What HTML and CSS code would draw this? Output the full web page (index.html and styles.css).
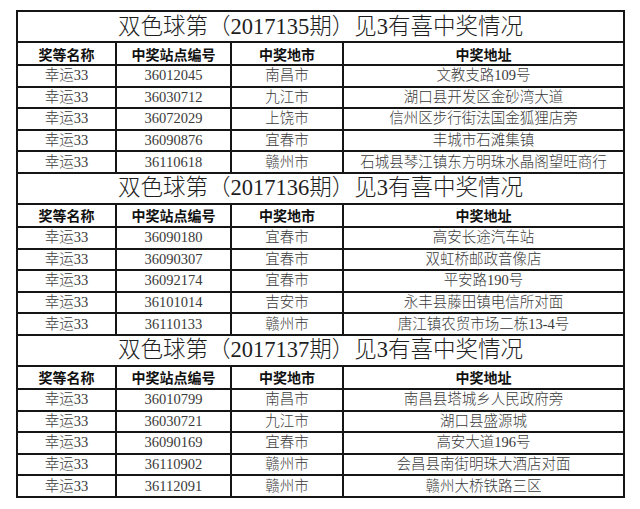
FILE: index.html
```html
<!DOCTYPE html>
<html lang="zh-CN">
<head>
<meta charset="utf-8">
<title>双色球见3有喜中奖情况</title>
<link rel="stylesheet" href="styles.css">
</head>
<body>
<table class="sheet">
  <colgroup>
    <col class="c1"><col class="c2"><col class="c3"><col class="c4">
  </colgroup>
  <tbody>
    <tr class="title"><td colspan="4">双色球第（2017135期）见3有喜中奖情况</td></tr>
    <tr class="head"><th>奖等名称</th><th>中奖站点编号</th><th>中奖地市</th><th>中奖地址</th></tr>
    <tr class="row"><td>幸运33</td><td>36012045</td><td>南昌市</td><td>文教支路109号</td></tr>
    <tr class="row"><td>幸运33</td><td>36030712</td><td>九江市</td><td>湖口县开发区金砂湾大道</td></tr>
    <tr class="row"><td>幸运33</td><td>36072029</td><td>上饶市</td><td>信州区步行街法国金狐狸店旁</td></tr>
    <tr class="row"><td>幸运33</td><td>36090876</td><td>宜春市</td><td>丰城市石滩集镇</td></tr>
    <tr class="row"><td>幸运33</td><td>36110618</td><td>赣州市</td><td>石城县琴江镇东方明珠水晶阁望旺商行</td></tr>

    <tr class="title"><td colspan="4">双色球第（2017136期）见3有喜中奖情况</td></tr>
    <tr class="head"><th>奖等名称</th><th>中奖站点编号</th><th>中奖地市</th><th>中奖地址</th></tr>
    <tr class="row"><td>幸运33</td><td>36090180</td><td>宜春市</td><td>高安长途汽车站</td></tr>
    <tr class="row"><td>幸运33</td><td>36090307</td><td>宜春市</td><td>双虹桥邮政音像店</td></tr>
    <tr class="row"><td>幸运33</td><td>36092174</td><td>宜春市</td><td>平安路190号</td></tr>
    <tr class="row"><td>幸运33</td><td>36101014</td><td>吉安市</td><td>永丰县藤田镇电信所对面</td></tr>
    <tr class="row"><td>幸运33</td><td>36110133</td><td>赣州市</td><td>唐江镇农贸市场二栋13-4号</td></tr>

    <tr class="title"><td colspan="4">双色球第（2017137期）见3有喜中奖情况</td></tr>
    <tr class="head"><th>奖等名称</th><th>中奖站点编号</th><th>中奖地市</th><th>中奖地址</th></tr>
    <tr class="row"><td>幸运33</td><td>36010799</td><td>南昌市</td><td>南昌县塔城乡人民政府旁</td></tr>
    <tr class="row"><td>幸运33</td><td>36030721</td><td>九江市</td><td>湖口县盛源城</td></tr>
    <tr class="row"><td>幸运33</td><td>36090169</td><td>宜春市</td><td>高安大道196号</td></tr>
    <tr class="row"><td>幸运33</td><td>36110902</td><td>赣州市</td><td>会昌县南街明珠大酒店对面</td></tr>
    <tr class="row"><td>幸运33</td><td>36112091</td><td>赣州市</td><td>赣州大桥铁路三区</td></tr>
  </tbody>
</table>
</body>
</html>
```

FILE: styles.css
```css
html, body {
  margin: 0;
  padding: 0;
  background: #ffffff;
}

body {
  padding: 10px 0 0 16px;
}

.sheet {
  border-collapse: collapse;
  table-layout: fixed;
  width: 607px;
  font-family: "Liberation Serif", "Noto Sans CJK SC", serif;
  color: #3a3a3a;
}

.c1 { width: 99px; }
.c2 { width: 115px; }
.c3 { width: 112px; }
.c4 { width: 281px; }

.sheet td,
.sheet th {
  border: 2px solid #151515;
  padding: 0;
  text-align: center;
  vertical-align: middle;
  white-space: nowrap;
  overflow: hidden;
}

.title td {
  height: 29px;
  font-size: 22.5px;
  font-weight: 300;
  color: #1e1e1e;
  line-height: 28px;
}

.head th {
  height: 21px;
  font-family: "Noto Sans CJK SC", sans-serif;
  font-size: 14px;
  font-weight: 700;
  color: #111111;
  line-height: 20px;
}

.row td {
  height: 19.6px;
  font-size: 14.5px;
  font-weight: 300;
  line-height: 19px;
}
```
